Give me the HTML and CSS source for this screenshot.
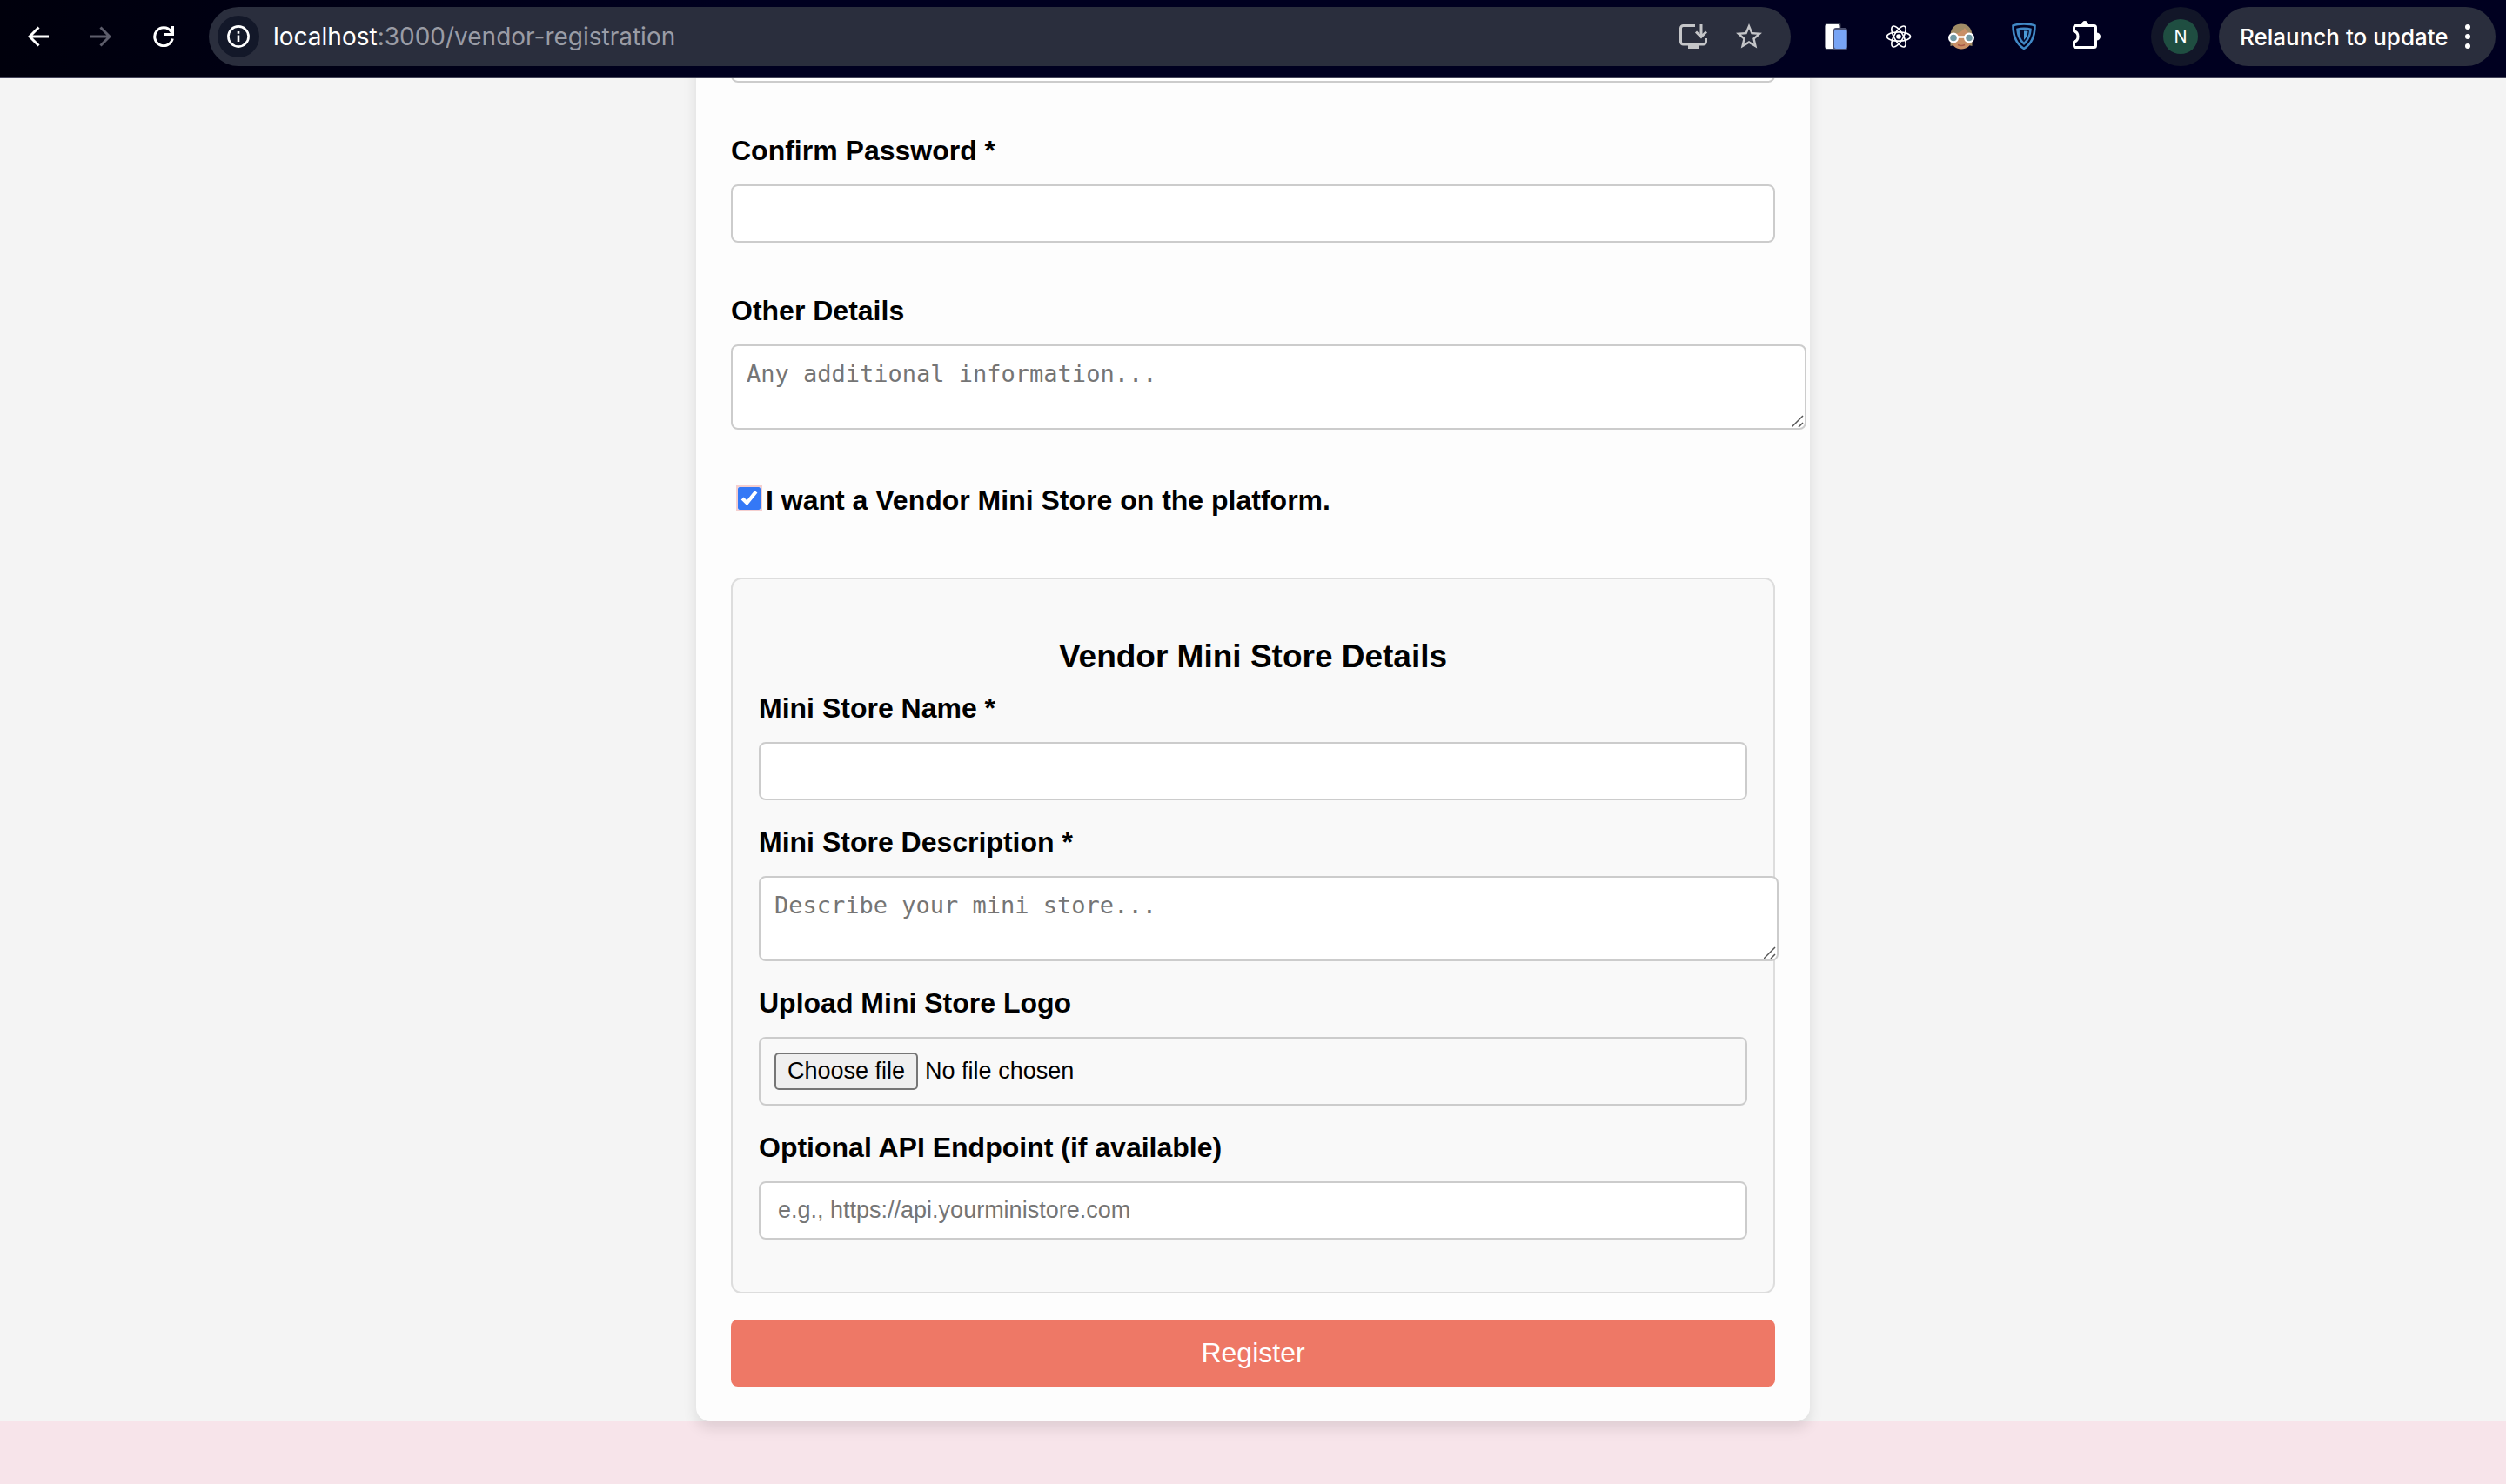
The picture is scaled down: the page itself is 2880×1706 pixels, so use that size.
FILE: index.html
```html
<!DOCTYPE html>
<html lang="en">
<head>
<meta charset="utf-8">
<title>Vendor Registration</title>
<link rel="stylesheet" href="styles.css">
</head>
<body>
<header class="toolbar">
  <nav class="nav" aria-label="History">
    <button class="tool" type="button" aria-label="Back"><svg width="24" height="24" viewBox="0 0 24 24" fill="none" stroke="#fff" stroke-width="3"><path d="M24 12H2.500M12.500 1.500L2 12l10.500 10.500"/></svg></button>
    <button class="tool" type="button" aria-label="Forward"><svg width="24" height="24" viewBox="0 0 24 24" fill="none" stroke="#5d5d6b" stroke-width="3"><path d="M0 12h21.500M11.500 1.500L22 12 11.500 22.500"/></svg></button>
    <button class="tool" type="button" aria-label="Reload"><svg width="24" height="24" viewBox="0 0 24 24" fill="none" stroke="#fff" stroke-width="3"><path d="M22.300 14.500A10.400 10.400 0 1 1 20.500 6L22 8.500M22.500 0v9.500H13"/></svg></button>
  </nav>
  <div class="address">
    <button class="info" type="button" aria-label="Site information"><svg width="26" height="26" viewBox="0 0 26 26" fill="none" stroke="#fff" stroke-width="2.600"><circle cx="13" cy="13" r="11.600"/><path d="M13 11.500v7.500M13 7v2.800"/></svg></button>
    <span class="url"><span class="host">localhost</span>:3000/vendor-registration</span>
    <button class="action" type="button" aria-label="Install app"><svg width="32" height="32" viewBox="0 0 32 32" fill="none" stroke="#c4c5c8" stroke-width="3"><path d="M18 3.500H4.500a3 3 0 0 0-3 3V22a3 3 0 0 0 3 3h23a3 3 0 0 0 3-3v-4M25 2v14M19 10.500l6 6 6-6"/><path d="M10 25h12v5H10z" fill="#c4c5c8" stroke="none"/></svg></button>
    <button class="action" type="button" aria-label="Bookmark"><svg width="36" height="36" viewBox="0 0 24 24" fill="#c4c5c8"><path d="M22 9.240l-7.190-.62L12 2 9.190 8.630 2 9.240l5.460 4.730L5.820 21 12 17.270 18.180 21l-1.630-7.030L22 9.240zM12 15.400l-3.760 2.270 1-4.280-3.320-2.880 4.380-.38L12 6.100l1.710 4.040 4.380.38-3.320 2.880 1 4.280L12 15.400z"/></svg></button>
  </div>
  <div class="extensions">
    <button class="tool" type="button" aria-label="Responsive viewer"><svg width="26" height="32" viewBox="0 0 26 32"><rect x=".5" y="0" width="18" height="32" rx="3" fill="#3e4256"/><rect x=".5" y="2" width="17" height="28" rx="2" fill="#fff"/><rect x="10" y="6" width="16" height="26" rx="3" fill="#4a5070"/><rect x="11" y="8" width="14.500" height="22" rx="2" fill="#78a4f5"/></svg></button>
    <button class="tool" type="button" aria-label="React developer tools"><svg width="30" height="28" viewBox="-15 -14 30 28" fill="none" stroke="#fff" stroke-width="1.700"><ellipse rx="13.500" ry="5.200"/><ellipse rx="13.500" ry="5.200" transform="rotate(60)"/><ellipse rx="13.500" ry="5.200" transform="rotate(120)"/><circle r="2.800" fill="#fff" stroke="none"/></svg></button>
    <button class="tool" type="button" aria-label="Goggles"><svg width="30" height="30" viewBox="0 0 30 30"><path d="M2.500 26V13C3 5 8 .5 15 .5S27 5 27.500 13v13l-4-1h-17z" fill="#a08c66"/><path d="M4.500 13c5-1 11-3 14.500-8 2 4 5 6 7 8v7c0 6-5 9.500-11 9.500S4.500 26 4.500 20z" fill="#c98f66"/><path d="M11 24.500c2.500 1.200 5.500 1.200 8 0" stroke="#a85a48" stroke-width="1.500" fill="none"/><path d="M11 15.500h8" stroke="#fff" stroke-width="2.500"/><circle cx="6" cy="16.500" r="4.900" fill="#7199a4" stroke="#fff" stroke-width="2.200"/><circle cx="24" cy="16.500" r="4.900" fill="#7199a4" stroke="#fff" stroke-width="2.200"/></svg></button>
    <button class="tool" type="button" aria-label="Shield"><svg width="28" height="32" viewBox="0 0 28 32"><path d="M14 1.500c4.500 0 9 .5 12.500 2C26.500 15 22 25 14 30 6 25 1.500 15 1.500 3.500 5 2 9.500 1.500 14 1.500z" fill="none" stroke="#4189c7" stroke-width="2.600"/><path d="M14 5.500c3 0 6 .4 8.800 1.200C22.500 14 20 21 14 26 8 21 5.500 14 5.200 6.700 8 5.900 11 5.500 14 5.500z" fill="#4189c7"/><path d="M14 8.500c2 0 4 .2 6 .7-.5 5-2 9.300-6 13.300-4-4-5-8.300-5.200-13.300C10.500 8.700 12 8.500 14 8.500z" fill="#070c30"/><path d="M14 9.500c1.700 0 3 .1 4.500.5-.4 4-1.500 7-4.500 10z" fill="#4b9ad8"/></svg></button>
    <button class="tool" type="button" aria-label="Extensions"><svg width="32" height="36" viewBox="0 0 32 36" fill="none" stroke="#fff" stroke-width="3"><path d="M1.500 12V7.500a2 2 0 0 1 2-2h21a2 2 0 0 1 2 2v21a2 2 0 0 1-2 2h-21a2 2 0 0 1-2-2V24c6-1 6-11 0-12z" stroke-linejoin="round"/><path d="M10 5a4 5 0 0 1 8 0zM27.500 13.500a4.500 4.500 0 0 1 0 9z" fill="#fff" stroke="none"/></svg></button>
  </div>
  <button class="profile" type="button"><span class="initial">N</span></button>
  <button class="relaunch" type="button">Relaunch to update<svg width="6" height="28" viewBox="0 0 6 28" fill="#fff"><circle cx="3" cy="3" r="3"/><circle cx="3" cy="14" r="3"/><circle cx="3" cy="25" r="3"/></svg></button>
</header>
<main class="viewport">
  <section class="page">
    <form class="card">
      <div class="group"><input class="field" type="password" aria-label="Password"></div>
      <div class="group">
        <label class="label" for="confirm">Confirm Password *</label>
        <input class="field" id="confirm" type="password">
      </div>
      <div class="group">
        <label class="label" for="details">Other Details</label>
        <textarea class="area" id="details" placeholder="Any additional information..."></textarea>
      </div>
      <div class="optin">
        <input class="tick" id="ministore" type="checkbox" checked>
        <label for="ministore">I want a Vendor Mini Store on the platform.</label>
      </div>
      <section class="store">
        <h3 class="title">Vendor Mini Store Details</h3>
        <div class="row">
          <label class="label" for="name">Mini Store Name *</label>
          <input class="field" id="name" type="text">
        </div>
        <div class="row">
          <label class="label" for="description">Mini Store Description *</label>
          <textarea class="area" id="description" placeholder="Describe your mini store..."></textarea>
        </div>
        <div class="row">
          <label class="label" for="logo">Upload Mini Store Logo</label>
          <div class="upload">
            <input class="file" id="logo" type="file">
            <label class="choose" for="logo">Choose file</label>
            <span>No file chosen</span>
          </div>
        </div>
        <div class="row">
          <label class="label" for="api">Optional API Endpoint (if available)</label>
          <input class="field" id="api" type="url" placeholder="e.g., https://api.yourministore.com">
        </div>
      </section>
      <button class="submit" type="submit">Register</button>
    </form>
  </section>
  <footer class="footer"></footer>
</main>
</body>
</html>
```
FILE: styles.css
```css
* { box-sizing: border-box; }

body {
  margin: 0;
  height: 100vh;
  display: flex;
  flex-direction: column;
  overflow: hidden;
  font-family: "Liberation Sans", Arial, sans-serif;
  font-size: 32px;
  color: #000;
}

button { font: inherit; border: 0; padding: 0; background: none; color: inherit; }
svg { display: block; flex: none; }

/* Browser toolbar */
.toolbar {
  flex: none;
  display: flex;
  align-items: center;
  padding: 8px 12px 12px 8px;
  border-bottom: 2px solid #45455a;
  background: linear-gradient(90deg, #00000c, #000020 30%);
  color: #fff;
  font-family: Inter, Roboto, sans-serif;
}
.nav, .extensions { display: flex; }
.tool { width: 72px; height: 68px; display: grid; place-items: center; }
.address {
  flex: 1;
  display: flex;
  align-items: center;
  height: 68px;
  margin: 0 16px;
  padding: 0 16px 0 10px;
  border-radius: 34px;
  background: #2a2e3d;
}
.info {
  width: 48px;
  height: 48px;
  display: grid;
  place-items: center;
  border-radius: 50%;
  background: #131829;
}
.url { flex: 1; margin-left: 16px; font-size: 28px; color: #9a9ca5; white-space: nowrap; }
.host { color: #fff; }
.action { width: 64px; height: 64px; display: grid; place-items: center; }
.profile {
  width: 68px;
  height: 68px;
  display: grid;
  place-items: center;
  margin: 0 10px 0 38px;
  border-radius: 50%;
  background: #121628;
}
.initial {
  width: 40px;
  border-radius: 50%;
  background: #1f4e41;
  font-size: 20px;
  line-height: 40px;
  text-align: center;
}
.relaunch {
  display: flex;
  align-items: center;
  justify-content: space-between;
  width: 318px;
  height: 68px;
  padding: 0 29px 0 24px;
  border-radius: 34px;
  background: #2a2e3d;
  font-size: 26px;
  font-weight: 500;
  white-space: nowrap;
}

/* Page, scrolled to its end */
.viewport {
  flex: 1;
  min-height: 0;
  display: flex;
  flex-direction: column;
  justify-content: flex-end;
  overflow: hidden;
}
.page { flex: none; position: relative; z-index: 1; background: #f4f4f4; }
.footer { flex: none; height: 72px; background: #f7e4ea; }

.card {
  max-width: 1280px;
  margin: 0 auto;
  padding: 40px;
  border-radius: 16px;
  background: #fdfdfd;
  box-shadow: 0 8px 16px rgba(0, 0, 0, 0.1);
}
.group { margin-bottom: 59px; }
.row { margin-bottom: 29px; }
.label { display: block; margin-bottom: 20px; font-weight: 700; line-height: 38px; }

.field, .area, .upload {
  display: block;
  width: 100%;
  border: 2px solid #ccc;
  border-radius: 8px;
  font-size: 27px;
}
.field { height: 67px; padding: 0 20px; background: #fff; font-family: inherit; }
.area {
  box-sizing: content-box;
  height: 62px;
  padding: 16px;
  background: #fff;
  font-family: "DejaVu Sans Mono", monospace;
  line-height: 31px;
}
.field::placeholder, .area::placeholder { color: #757575; }
.area::-webkit-resizer {
  background: url("data:image/svg+xml,%3Csvg xmlns='http://www.w3.org/2000/svg' width='15' height='15'%3E%3Cpath d='M0 14L13 1M8 14l5-5' stroke='%23555' stroke-width='1.500'/%3E%3C/svg%3E") no-repeat right bottom;
}

.optin {
  display: flex;
  align-items: center;
  height: 44px;
  margin-bottom: 67px;
  font-weight: 700;
  line-height: 38px;
}
.tick {
  width: 26px;
  height: 26px;
  margin: 0 6px 4px 8px;
  accent-color: #3478f6;
  outline: 2px solid #f5cfcf;
}

.store {
  margin-bottom: 30px;
  padding: 30px 30px 31px;
  border: 2px solid #ddd;
  border-radius: 12px;
  background: #f9f9f9;
}
.title { margin: 37px 0 18px; font-size: 37px; line-height: 44px; text-align: center; }

.upload {
  display: flex;
  align-items: center;
  gap: 8px;
  height: 79px;
  padding: 0 16px;
}
.file { position: absolute; width: 1px; height: 1px; opacity: 0; }
.choose {
  padding: 0 13px;
  border: 2px solid #767676;
  border-radius: 5px;
  background: #efefef;
  line-height: 39px;
}

.submit {
  display: block;
  width: 100%;
  height: 77px;
  border-radius: 8px;
  background: #ee7866;
  color: #fff;
}
```
